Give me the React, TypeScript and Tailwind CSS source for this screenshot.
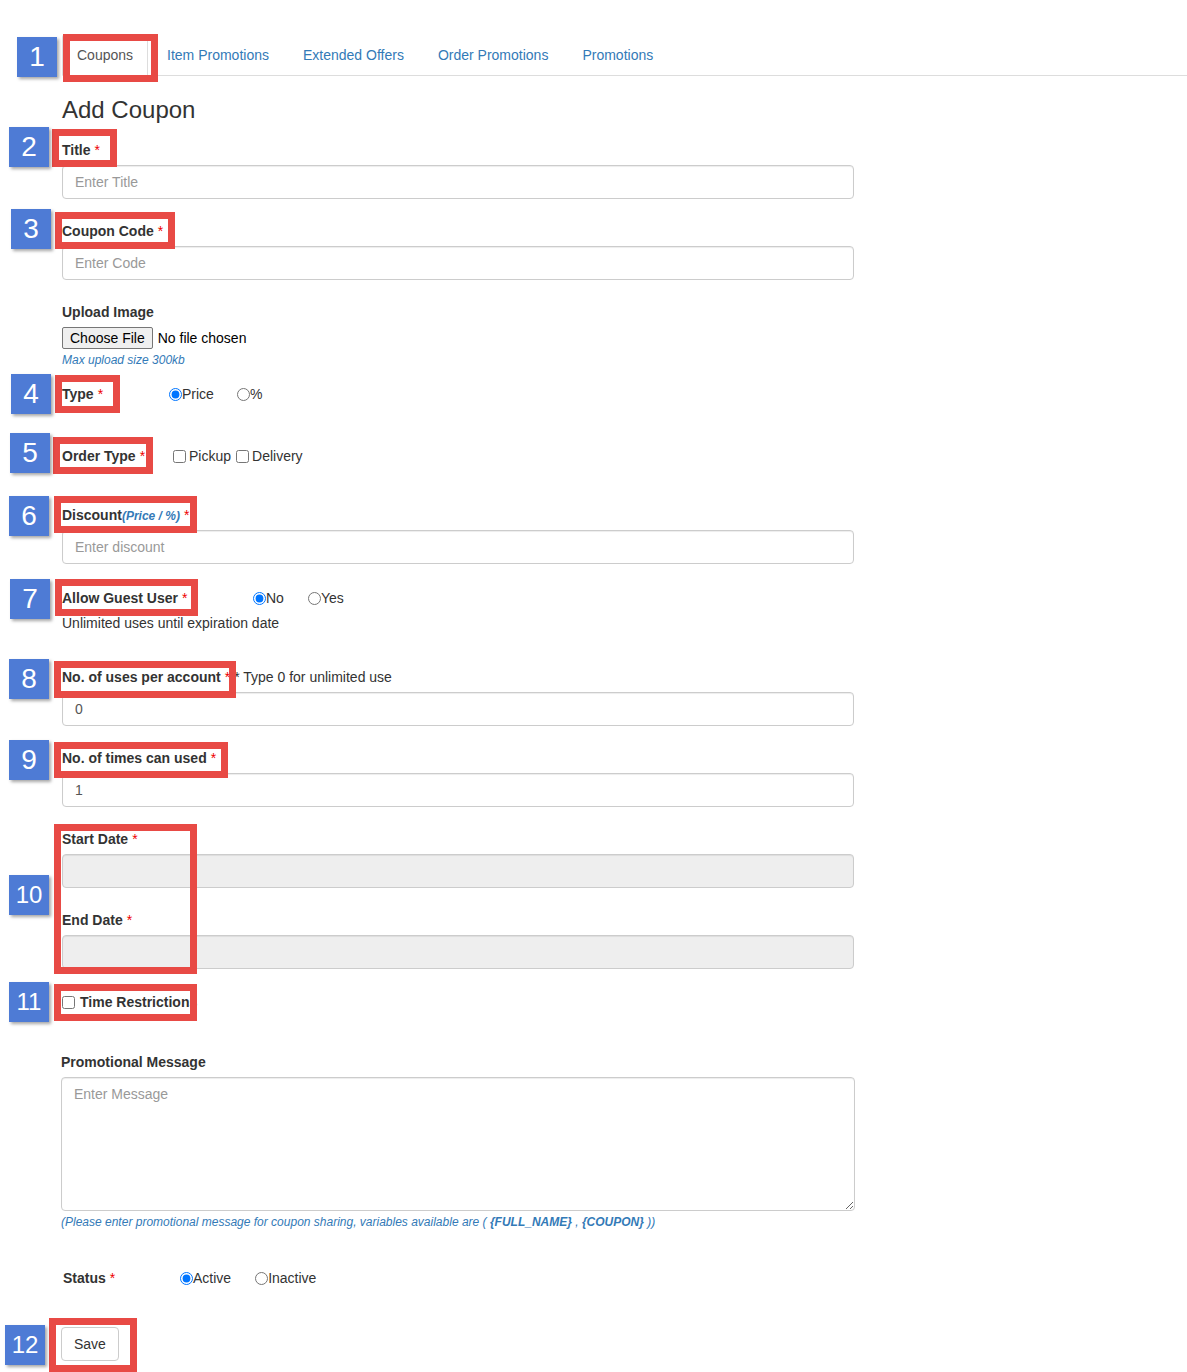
import React from 'react';

const inputCls =
  'block w-[792px] h-[34px] px-3 border border-[#ccc] rounded-[4px] text-[14px] text-[#555] placeholder:text-[#999] bg-white shadow-[inset_0_1px_1px_rgba(0,0,0,0.075)] outline-none';

const badges = [
  { n: '1', x: 17, y: 37 },
  { n: '2', x: 9, y: 127 },
  { n: '3', x: 11, y: 209 },
  { n: '4', x: 11, y: 374 },
  { n: '5', x: 10, y: 433 },
  { n: '6', x: 9, y: 496 },
  { n: '7', x: 10, y: 579 },
  { n: '8', x: 9, y: 659 },
  { n: '9', x: 9, y: 740 },
  { n: '10', x: 9, y: 875 },
  { n: '11', x: 9, y: 982 },
  { n: '12', x: 5, y: 1325 },
];

// red highlight boxes: left, top, right, bottom
const boxes = [
  [63, 34, 158, 82],
  [52, 129, 117, 167],
  [55, 212, 175, 249],
  [55, 375, 120, 413],
  [53, 437, 153, 474],
  [54, 496, 197, 533],
  [55, 579, 198, 616],
  [54, 661, 236, 698],
  [54, 742, 228, 778],
  [54, 824, 197, 974],
  [54, 984, 197, 1021],
  [49, 1318, 137, 1372],
];

const tabs = ['Coupons', 'Item Promotions', 'Extended Offers', 'Order Promotions', 'Promotions'];

const Req = () => <span className="text-[#e00] font-normal ml-[4px]">*</span>;

const Label = ({ children, className = '' }: { children: React.ReactNode; className?: string }) => (
  <div className={`font-bold text-[14px] leading-5 h-5 text-[#333] ${className}`}>{children}</div>
);

const Radio = ({ label, checked, name, className = '' }: { label: string; checked?: boolean; name: string; className?: string }) => (
  <label className={`flex items-center ${className}`}>
    <input type="radio" name={name} defaultChecked={checked} className="m-0 w-[13px] h-[13px]" />
    <span>{label}</span>
  </label>
);

const Check = ({ label, className = '' }: { label: string; className?: string }) => (
  <label className={`flex items-center ${className}`}>
    <input type="checkbox" className="m-0 w-[13px] h-[13px]" />
    <span className="ml-[3px]">{label}</span>
  </label>
);

export default function App() {
  return (
    <div className="relative w-full min-h-[1372px] bg-white text-[14px] text-[#333]" style={{ fontFamily: '"Liberation Sans", Arial, sans-serif' }}>
      {/* tabs */}
      <div className="pt-[34px] pl-[62px]">
        <ul className="flex border-b border-[#ddd] h-[42px]">
          {tabs.map((t, i) => (
            <li key={t} className="mr-[4px] -mb-px">
              <span
                className={`block px-[14px] py-[10px] leading-5 border rounded-t-[4px] ${
                  i === 0 ? 'border-[#ddd] border-b-white bg-white text-[#555]' : 'border-transparent text-[#337ab7]'
                }`}
              >
                {t}
              </span>
            </li>
          ))}
        </ul>
      </div>

      <div className="pl-[62px]">
        <h3 className="mt-[21px] text-[24px] leading-[26px] text-[#333]">Add Coupon</h3>

        <Label className="mt-[17px]">Title<Req /></Label>
        <input className={`${inputCls} mt-[5px]`} placeholder="Enter Title" />

        <Label className="mt-[22px]">Coupon Code<Req /></Label>
        <input className={`${inputCls} mt-[5px]`} placeholder="Enter Code" />

        <Label className="mt-[22px]">Upload Image</Label>
        <div className="mt-[5px] flex items-center h-[22px] text-[14px] text-black">
          <span className="h-[22px] px-[7px] flex items-center bg-[#efefef] border border-[#767676] rounded-[2px]">Choose File</span>
          <span className="ml-[5px]">No file chosen</span>
        </div>
        <div className="mt-[3px] text-[12px] leading-4 italic text-[#337ab7]">Max upload size 300kb</div>

        <div className="mt-[16px] flex items-center h-5">
          <Label className="w-[107px]">Type<Req /></Label>
          <Radio name="type" label="Price" checked />
          <Radio name="type" label="%" className="ml-[23px]" />
        </div>

        <div className="mt-[42px] flex items-center h-5">
          <Label className="w-[111px]">Order Type<Req /></Label>
          <Check label="Pickup" />
          <Check label="Delivery" className="ml-[5px]" />
        </div>

        <Label className="mt-[39px]">
          Discount<span className="italic text-[12px] text-[#337ab7]">(Price / %)</span>
          <Req />
        </Label>
        <input className={`${inputCls} mt-[5px]`} placeholder="Enter discount" />

        <div className="mt-[24px] flex items-center h-5">
          <Label className="w-[191px]">Allow Guest User<Req /></Label>
          <Radio name="guest" label="No" checked />
          <Radio name="guest" label="Yes" className="ml-[24px]" />
        </div>
        <div className="mt-[5px] leading-5">Unlimited uses until expiration date</div>

        <Label className="mt-[34px]">
          No. of uses per account<Req />
          <span className="font-normal ml-[4px]">* Type 0 for unlimited use</span>
        </Label>
        <input className={`${inputCls} mt-[5px]`} defaultValue="0" />

        <Label className="mt-[22px]">No. of times can used<Req /></Label>
        <input className={`${inputCls} mt-[5px]`} defaultValue="1" />

        <Label className="mt-[22px]">Start Date<Req /></Label>
        <input className={`${inputCls} mt-[5px] !bg-[#eee]`} disabled />

        <Label className="mt-[22px]">End Date<Req /></Label>
        <input className={`${inputCls} mt-[5px] !bg-[#eee]`} disabled />

        <div className="mt-[23px] flex items-center h-5">
          <input type="checkbox" className="m-0 w-[13px] h-[13px]" />
          <span className="ml-[5px] font-bold">Time Restrictions</span>
        </div>

        <Label className="mt-[40px] -ml-px">Promotional Message</Label>
        <textarea
          className="block mt-[5px] -ml-px w-[794px] h-[134px] px-3 py-[6px] border border-[#ccc] rounded-[4px] text-[14px] text-[#555] placeholder:text-[#999] shadow-[inset_0_1px_1px_rgba(0,0,0,0.075)] outline-none"
          placeholder="Enter Message"
        />
        <div className="mt-[3px] -ml-px text-[12px] leading-4 italic text-[#337ab7]">
          (Please enter promotional message for coupon sharing, variables available are ( <b>{'{FULL_NAME}'}</b> , <b>{'{COUPON}'}</b> ))
        </div>

        <div className="mt-[38px] ml-px flex items-center h-5">
          <Label className="w-[117px]">Status<Req /></Label>
          <Radio name="status" label="Active" checked />
          <Radio name="status" label="Inactive" className="ml-[24px]" />
        </div>

        <button className="mt-[39px] -ml-px h-[34px] px-3 border border-[#ccc] rounded-[4px] bg-white text-[#333] text-[14px]">Save</button>
        <div className="h-[11px]" />
      </div>

      {/* annotation overlays */}
      {boxes.map(([l, t, r, b], i) => (
        <div
          key={i}
          className="absolute border-[7px] border-[#e84a45] pointer-events-none"
          style={{ left: l, top: t, width: r - l, height: b - t }}
        />
      ))}
      {badges.map((b) => (
        <div
          key={b.n}
          className={`absolute w-[40px] h-[40px] bg-[#4e7bd5] text-white leading-[40px] text-center shadow-[2px_2px_3px_rgba(0,0,0,0.35)] ${
            b.n.length > 1 ? 'text-[24px]' : 'text-[28px]'
          }`}
          style={{ left: b.x, top: b.y }}
        >
          {b.n}
        </div>
      ))}
    </div>
  );
}
